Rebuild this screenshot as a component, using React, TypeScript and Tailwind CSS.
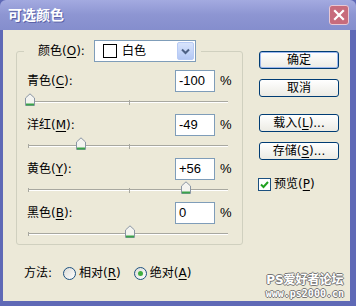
import React from "react";

const CJK = "font-['Tahoma','DejaVu_Sans','Noto_Sans_CJK_SC',sans-serif]";

function U({ c }: { c: string }) {
  return <span className="underline underline-offset-2">{c}</span>;
}

function Thumb() {
  return (
    <svg width="12" height="14" viewBox="0 0 12 14">
      <path d="M1.5 5 L6 0.8 L10.5 5 V12.5 H1.5 Z" fill="#f4f4f0" stroke="#8a96a4" strokeWidth="1" />
      <path d="M2 11.5 H10" stroke="#3aa34a" strokeWidth="2" />
    </svg>
  );
}

function Row({ label, k, value, pos }: { label: string; k: string; value: string; pos: number }) {
  return (
    <div className="flex flex-col">
      <div className="flex items-center h-[22px] pl-[10px] pr-[10px]">
        <div className="flex-1 text-[12px] text-black">
          {label}(<U c={k} />):
        </div>
        <div className="w-[40px] h-[22px] bg-white border border-[#7f9db9] flex items-center pl-[3px] text-[13px] font-['Liberation_Sans',sans-serif] text-black">
          {value}
        </div>
        <div className="ml-[5px] w-[12px] text-[13px] font-['Liberation_Sans',sans-serif] text-black">%</div>
      </div>
      <div className="relative h-[22px]">
        <div className="absolute left-[11px] w-[200px] top-[9px] h-[2px] border-t border-[#a8a8a0] border-b border-b-white" />
        <div className="absolute left-[11px] top-[8px] w-px h-[4px] bg-[#a8a8a0]" />
        <div className="absolute left-[112px] top-[8px] w-px h-[5px] bg-[#a8a8a0]" />
        <div className="absolute top-[1px]" style={{ left: 13 + pos - 6 }}>
          <Thumb />
        </div>
      </div>
    </div>
  );
}

function Button({ children, def }: { children: React.ReactNode; def?: boolean }) {
  return (
    <div
      className={
        "w-[80px] h-[18px] rounded-[3px] border border-[#003c74] bg-gradient-to-b from-white to-[#ecebe4] flex items-center justify-center text-[12px] text-black " +
        (def ? "shadow-[inset_0_0_0_1px_#9cb7ee]" : "")
      }
    >
      {children}
    </div>
  );
}

export default function App() {
  return (
    <div className={"w-[356px] h-[306px] flex flex-col bg-[#5f69b6] " + CJK}>
      <div className="h-[30px] flex items-center bg-gradient-to-b from-[#a3aae0] via-[#8d95d2] to-[#858ecd] pl-[8px] pr-[7px] rounded-t-[6px]">
        <div className="text-[14px] font-bold text-white [text-shadow:1px_1px_0_#5a62a8]">可选颜色</div>
        <div className="ml-auto w-[20px] h-[20px] rounded-[3px] bg-[#c76b7c] border border-[#e8c8d4] flex items-center justify-center">
          <svg width="12" height="12" viewBox="0 0 12 12">
            <path d="M2 2 L10 10 M10 2 L2 10" stroke="white" strokeWidth="2.2" strokeLinecap="square" />
          </svg>
        </div>
      </div>
      <div className="flex-1 ml-[3px] mr-[6px] mb-[5px] bg-[#ece9d8] relative flex">
        <div className="flex flex-col pl-[13px] pt-[10px]">
          <fieldset className="w-[227px] h-[205px] border border-[#d0d0bf] rounded-[3px]">
            <legend className="ml-[7px] pl-[14px] pr-[5px] flex items-center">
              <span className="text-[12px] text-black mr-[9px]">
                颜色(<U c="O" />):
              </span>
              <div className="w-[102px] h-[22px] bg-white border border-[#7f9db9] flex items-center">
                <div className="ml-[8px] w-[14px] h-[14px] border border-black bg-white" />
                <span className="ml-[5px] text-[12px] text-black">白色</span>
                <div className="ml-auto mr-px w-[17px] h-[18px] rounded-[2px] bg-gradient-to-b from-[#d8e4fc] to-[#b4c8f4] border border-[#b8cbf5] flex items-center justify-center">
                  <svg width="9" height="7" viewBox="0 0 9 7">
                    <path d="M1 1.5 L4.5 5 L8 1.5" fill="none" stroke="#4d6185" strokeWidth="2" />
                  </svg>
                </div>
              </div>
            </legend>
            <div className="pt-[8px] flex flex-col">
              <Row label="青色" k="C" value="-100" pos={0} />
              <Row label="洋红" k="M" value="-49" pos={51} />
              <Row label="黄色" k="Y" value="+56" pos={156} />
              <Row label="黑色" k="B" value="0" pos={100} />
            </div>
          </fieldset>
          <div className="mt-[20px] pl-[8px] flex items-center h-[16px] text-[12px] text-black">
            <span>方法:</span>
            <div className="ml-[11px] w-[13px] h-[13px] rounded-full border border-[#1c5180] bg-gradient-to-br from-[#dcdcd7] to-white" />
            <span className="ml-[3px]">
              相对(<U c="R" />)
            </span>
            <div className="ml-[13px] w-[13px] h-[13px] rounded-full border border-[#1c5180] bg-gradient-to-br from-[#dcdcd7] to-white flex items-center justify-center">
              <div className="w-[5px] h-[5px] rounded-full bg-[#3fae3f]" />
            </div>
            <span className="ml-[3px]">
              绝对(<U c="A" />)
            </span>
          </div>
        </div>
        <div className="ml-[16px] pt-[21px] flex flex-col">
          <Button def>确定</Button>
          <div className="mt-[10px]">
            <Button>取消</Button>
          </div>
          <div className="mt-[17px]">
            <Button>
              载入(<U c="L" />)...
            </Button>
          </div>
          <div className="mt-[10px]">
            <Button>
              存储(<U c="S" />)...
            </Button>
          </div>
          <div className="mt-[15px] flex items-center -ml-px">
            <div className="w-[13px] h-[13px] border border-[#1c5180] bg-white flex items-center justify-center">
              <svg width="9" height="9" viewBox="0 0 9 9">
                <path d="M1 4.5 L3.5 7 L8 2" fill="none" stroke="#21a121" strokeWidth="2" />
              </svg>
            </div>
            <span className="ml-[3px] text-[12px] text-black">
              预览(<U c="P" />)
            </span>
          </div>
        </div>
        <div className="absolute right-[6px] bottom-[2px] flex flex-col items-center text-white font-bold leading-none [text-shadow:-1px_0_0_#777,1px_0_0_#777,0_-1px_0_#777,0_1px_0_#777]">
          <span className="text-[12px] tracking-[0px]">PS爱好者论坛</span>
          <span className="text-[10px] mt-[3px] font-['DejaVu_Sans_Mono',monospace]">www.ps2000.cn</span>
        </div>
      </div>
    </div>
  );
}
